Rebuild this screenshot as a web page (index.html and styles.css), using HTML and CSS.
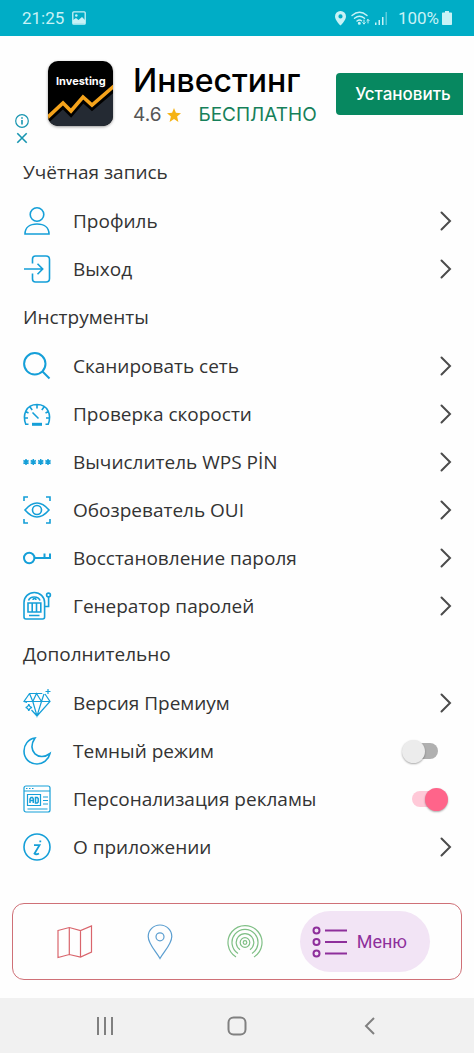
FILE: index.html
```
<!DOCTYPE html>
<html lang="ru">
<head>
<meta charset="utf-8">
<meta name="viewport" content="width=device-width, initial-scale=1">
<title>Меню</title>
<link rel="stylesheet" href="styles.css">
</head>
<body>
<svg class="defs" width="0" height="0" aria-hidden="true">
  <symbol id="chevron" viewBox="0 0 12 20"><path d="M1.500 1.500 10 10l-8.500 8.500" fill="none" stroke="currentColor" stroke-width="2" stroke-linecap="round"/></symbol>
</svg>
<header class="status">
  <span>21:25</span>
  <svg class="status-photo" width="14" height="14" viewBox="0 0 14 14"><rect x=".8" y=".8" width="12.400" height="12.400" rx="1" fill="none" stroke="currentColor" stroke-width="1.300"/><circle cx="4.300" cy="4.500" r="1.300" fill="currentColor"/><path d="M1 12.800V9l3-2 2.500 2L10 6l3 3v3.800z" fill="currentColor"/></svg>
  <div class="status-right">
    <svg width="11" height="15" viewBox="0 0 11 15"><path fill="currentColor" fill-rule="evenodd" d="M5.500 0A5.400 5.400 0 0 0 0 5.400C0 9 5.500 14.500 5.500 14.500S11 9 11 5.400A5.400 5.400 0 0 0 5.500 0zm0 3.300a2.100 2.100 0 1 1 0 4.200 2.100 2.100 0 0 1 0-4.200z"/></svg>
    <svg width="19" height="15" viewBox="0 0 19 15" fill="none" stroke="currentColor" stroke-width="1.400" stroke-linecap="round"><path d="M1 4.500q7.500-6.500 15 0M3.500 7.300q5-4.300 10 0M6 10q2.500-2 4.500-.3"/><circle cx="8.300" cy="12.300" r=".8" fill="currentColor"/><path d="M13 9v4m-1.300-1.300L13 13l1.300-1.300M17 12V8.500m-1.200 1.200L17 8.500l1.200 1.200" stroke-width="1"/></svg>
    <svg width="13" height="13" viewBox="0 0 13 13" fill="currentColor"><path d="M0 10.500h1.500V13H0zM3.500 8H5v5H3.500zM7 5h1.500v8H7z"/><path d="M10.500 0H12v13h-1.500z" opacity=".45"/></svg>
    <span class="battery">100%<svg width="10" height="14" viewBox="0 0 10 14"><path fill="currentColor" d="M3 0h4v1.500h2.300q.7 0 .7.700v11q0 .8-.8.800H.8q-.8 0-.8-.8v-11q0-.7.700-.7H3z"/></svg></span>
  </div>
</header>

<section class="ad">
  <div class="ad-tools">
    <button class="plain" aria-label="О рекламе"><svg width="14" height="14" viewBox="0 0 14 14" fill="none" stroke="currentColor"><circle cx="7" cy="7" r="6.300" stroke-width="1.200"/><path d="M7 6v4.500M7 3.300v1.400" stroke-width="1.600"/></svg></button>
    <button class="plain" aria-label="Закрыть"><svg width="12" height="12" viewBox="0 0 12 12" fill="none" stroke="currentColor" stroke-width="1.600"><path d="m1.300 1.300 9.400 9.400m0-9.400-9.400 9.400"/></svg></button>
  </div>
  <div class="ad-logo">
    <svg width="65" height="65" viewBox="0 0 65 65"><path d="M0 60 17 46l6 6 14-14 8 8 20-19v38H0z" fill="#242a33"/><path d="m-1 57 16-15 8 8 12-14 9 8 22-19" fill="none" stroke="#000" stroke-width="5" transform="translate(0 3)"/><path d="m-1 57 16-15 8 8 12-14 9 8 22-19" fill="none" stroke="#f5a31b" stroke-width="3.600"/><text x="8" y="24" class="logo-text">Investing</text></svg>
  </div>
  <div class="ad-info">
    <h1>Инвестинг</h1>
    <p><span>4.6</span><svg width="14" height="14" viewBox="0 0 14 14"><path d="m7 0 1.900 4.800 5.100.4-3.900 3.300L11.400 14 7 11l-4.400 3 1.300-5.500L0 5.200l5.100-.4z" fill="#f5b315"/></svg><span class="free">БЕСПЛАТНО</span></p>
  </div>
  <button class="install">Установить</button>
</section>

<main>
  <h2>Учётная запись</h2>
  <ul>
    <li><a class="row" href="#"><svg class="icon" viewBox="0 0 28 28"><circle cx="14" cy="7.500" r="6.800"/><path d="M2 27h24c0-6.500-5-10-12-10S2 20.500 2 27z"/></svg><span>Профиль</span><svg class="chevron"><use href="#chevron"/></svg></a></li>
    <li><a class="row" href="#"><svg class="icon" viewBox="0 0 28 28"><path d="M9.500 8.500V4q0-3 3-3H23q3.500 0 3.500 3.500v19Q26.500 27 23 27H12.500q-3 0-3-3v-5.500M1 14h18.500M14.500 8.800l5.200 5.200-5.200 5.200"/></svg><span>Выход</span><svg class="chevron"><use href="#chevron"/></svg></a></li>
  </ul>

  <h2>Инструменты</h2>
  <ul>
    <li><a class="row" href="#"><svg class="icon thick" viewBox="0 0 28 28"><circle cx="11.800" cy="11.800" r="10.700"/><path d="m19.500 19.500 7 7"/></svg><span>Сканировать сеть</span><svg class="chevron"><use href="#chevron"/></svg></a></li>
    <li><a class="row" href="#"><svg class="icon" viewBox="0 0 28 28"><path d="M5.500 24.300H2.800C-.8 15 3 4.500 14 4.500S28.800 15 25.200 24.300h-2.700M14 5v3.500M7 7l2.200 3M21 7l-2.200 3M2.500 11.500l3 1.500M25.500 11.500l-3 1.500M1.500 18H5M26.500 18H23M9.500 12.500l6 6"/><path d="M9 24.300h10" stroke-width="3"/></svg><span>Проверка скорости</span><svg class="chevron"><use href="#chevron"/></svg></a></li>
    <li><a class="row" href="#"><svg class="icon" viewBox="0 0 28 28"><path d="M3 11v6M.4 12.500l5.200 3M5.600 12.500l-5.200 3M10.300 11v6M7.700 12.500l5.200 3M12.900 12.500l-5.200 3M17.700 11v6M15.100 12.500l5.200 3M20.300 12.500l-5.200 3M25 11v6M22.400 12.500l5.200 3M27.600 12.500l-5.200 3" stroke-width="1.500"/></svg><span>Вычислитель WPS PİN</span><svg class="chevron"><use href="#chevron"/></svg></a></li>
    <li><a class="row" href="#"><svg class="icon" viewBox="0 0 28 28"><path d="M1 5V1h4M23 1h4v4M27 23v4h-4M5 27H1v-4M2 14q12-14 24 0-12 14-24 0z"/><circle cx="14" cy="14" r="4.500"/></svg><span>Обозреватель OUI</span><svg class="chevron"><use href="#chevron"/></svg></a></li>
    <li><a class="row" href="#"><svg class="icon key" viewBox="0 0 28 28"><circle cx="6.200" cy="14" r="5.200"/><path d="M11.500 14H27V9.500M21.500 14V9.500"/></svg><span>Восстановление пароля</span><svg class="chevron"><use href="#chevron"/></svg></a></li>
    <li><a class="row" href="#"><svg class="icon" viewBox="0 0 28 28"><path d="M1 25V10.500a10.300 10 0 0 1 20.600 0V25q0 2-2 2H3q-2 0-2-2zM5 11h12.800v9H5zM9.200 11v9M13.500 11v9M6 23.500h10.500M5.500 8.500a6 5 0 0 1 11.500 0M10 8a1.500 1.500 0 0 1 3 0M21.600 14.500h4V5"/><circle cx="25.500" cy="3" r="1.900"/></svg><span>Генератор паролей</span><svg class="chevron"><use href="#chevron"/></svg></a></li>
  </ul>

  <h2>Дополнительно</h2>
  <ul>
    <li><a class="row" href="#"><svg class="icon fine" viewBox="0 0 28 28"><path d="M6.500 4.500h12.800M22 5l5 7.500L14 27 8.500 21M4 13.500l-3-1 5.500-8M1 12.500h26M6.500 4.500l3.300 8L14 27l4.500-14.500L21 5M9.800 12.500 13.500 4.500l5 8M25 0v5M22.500 2.500h5"/><path d="M5.800 15q.5 3 3.200 3.500-2.700.5-3.200 3.500-.5-3-3.200-3.500 2.700-.5 3.200-3.500z"/></svg><span>Версия Премиум</span><svg class="chevron"><use href="#chevron"/></svg></a></li>
    <li><label class="row"><svg class="icon" viewBox="0 0 28 28"><path d="M12 1C5 2 1 8 1 14c0 7.500 5.500 13 13 13 6 0 11.500-4 13-10.500C16 25 3 14 12 1z"/></svg><span>Темный режим</span><input class="switch" type="checkbox"></label></li>
    <li><label class="row"><svg class="icon fine" viewBox="0 0 28 28"><rect x="1" y="1" width="26" height="26" rx="2"/><path d="M1 6h26M3 3.500h1.500M6 3.500h1.500M9 3.500h1.500M4.500 9.500h13v11h-13zM20 12h5M20 15.500h5M20 19h5M4.500 24h20"/><path d="M7 18v-4l1-1.500h1.500l.8 1.500v4M7 15.500h3.300M12.500 12.500V18h1.700l1-1v-3.500l-1-1z" stroke-width="1.500"/></svg><span>Персонализация рекламы</span><input class="switch" type="checkbox" checked></label></li>
    <li><a class="row" href="#"><svg class="icon" viewBox="0 0 28 28"><circle cx="14" cy="14" r="13"/><path d="M11 12.200h5.500l-5 8.300q1.500 1.500 4.500 0M17.300 7.500v1.800" stroke-width="1.800"/></svg><span>О приложении</span><svg class="chevron"><use href="#chevron"/></svg></a></li>
  </ul>
</main>

<nav class="tabs">
  <a href="#" class="tab red" aria-label="Карта"><svg width="36" height="36" viewBox="0 0 36 36"><path d="M1 6.500 12.300 3.500 23.500 6.500 34.500 2v26L23.500 33 12.300 30.500 1 33.500zM12.300 3.500v27M23.500 6.500V33"/></svg></a>
  <a href="#" class="tab blue" aria-label="Место"><svg width="26" height="36" viewBox="0 0 26 36"><path d="M13 34.500C9 27.500 1.200 20 1.200 12.500a11.800 11.500 0 0 1 23.600 0C24.800 20 17 27.500 13 34.500z"/><circle cx="13" cy="12.800" r="4"/></svg></a>
  <a href="#" class="tab green" aria-label="Точка доступа"><svg width="36" height="36" viewBox="0 0 36 36"><circle cx="18" cy="18.500" r="1.800"/><circle cx="18" cy="18.500" r="4.800"/><path d="M13 25.700a8.800 8.800 0 1 1 10 0M11 29.400a13 13 0 1 1 14 0M9 33a17 17 0 1 1 18 0"/></svg></a>
  <a href="#" class="tab menu" aria-current="page"><svg width="36" height="32" viewBox="0 0 36 32"><circle cx="4.500" cy="4.500" r="3"/><circle cx="4.500" cy="16" r="3"/><circle cx="4.500" cy="27.500" r="3"/><path d="M13 4.500h22M13 16h22M13 27.500h22"/></svg><span>Меню</span></a>
</nav>

<footer class="system">
  <button class="plain" aria-label="Недавние"><svg width="18" height="18" viewBox="0 0 18 18"><path d="M2 0v18M9 0v18M16 0v18"/></svg></button>
  <button class="plain" aria-label="Домой"><svg width="20" height="20" viewBox="0 0 20 20"><rect x="1.500" y="1.500" width="17" height="17" rx="5"/></svg></button>
  <button class="plain" aria-label="Назад"><svg width="20" height="20" viewBox="0 0 20 20"><path d="M14 2 6 10l8 8"/></svg></button>
</footer>
</body>
</html>
```
FILE: styles.css
```
* { box-sizing: border-box; }
body {
  margin: 0;
  min-height: 100vh;
  display: flex;
  flex-direction: column;
  background: #fefefe;
  color: #333;
  font-family: "Open Sans", "Noto Sans", sans-serif;
}
.defs { position: absolute; }
h1, h2, p, ul { margin: 0; padding: 0; font-weight: 400; }
ul { list-style: none; }
a { color: inherit; text-decoration: none; }
.plain { display: flex; padding: 0; border: 0; background: none; color: inherit; }

.status {
  display: flex;
  align-items: center;
  gap: 8px;
  height: 36px;
  padding: 0 22px;
  background: #00adc6;
  color: #c8f2f6;
  font: 17px Roboto, sans-serif;
}
.status-right { display: flex; align-items: center; gap: 5px; margin-left: auto; }
.battery { display: flex; align-items: center; gap: 3px; padding-left: 5px; }

.ad { display: flex; height: 112px; padding: 25px 11px 0 15px; }
.ad-tools {
  display: flex;
  flex-direction: column;
  align-items: center;
  gap: 4px;
  width: 13px;
  margin-right: 20px;
  padding-top: 53px;
  color: #1795b0;
}
.ad-logo {
  width: 65px;
  height: 65px;
  overflow: hidden;
  border-radius: 10px;
  background: #000;
  box-shadow: 0 1px 3px #0006;
}
.logo-text { fill: #fff; font: 700 11px Inter, sans-serif; }
.ad-info { margin-left: 20px; font-family: Inter, Roboto, sans-serif; }
.ad-info h1 { color: #000; font-size: 32px; font-weight: 500; line-height: 40px; }
.ad-info p { display: flex; align-items: center; color: #555; font-size: 19px; line-height: 28px; }
.ad-info p svg { margin: 0 17px 0 6px; }
.free { color: #16805a; }
.install {
  width: 127px;
  height: 42px;
  margin: 12px 0 0 auto;
  padding: 0 0 0 7px;
  border: 0;
  border-radius: 4px 0 0 4px;
  background: #078860;
  color: #fff;
  font: 500 17px Inter, Roboto, sans-serif;
}

main { font-size: 19px; }
h2 { padding-left: 23px; font-size: 19px; line-height: 49px; }
.row { display: flex; align-items: center; height: 48px; padding: 0 22px 0 23px; }
.row span { margin-left: 22px; }
.icon {
  width: 28px;
  height: 28px;
  overflow: visible;
  fill: none;
  stroke: #159fd8;
  stroke-width: 1.6;
}
.thick, .key { stroke-width: 2; }
.fine { stroke-width: 1.2; }
.chevron { width: 12px; height: 20px; margin-left: auto; color: #4b4b4b; }
.switch {
  appearance: none;
  display: grid;
  align-items: center;
  width: 36px;
  height: 24px;
  margin: 0 14px 0 auto;
}
.switch::before, .switch::after { content: ""; grid-area: 1 / 1; }
.switch::before {
  justify-self: end;
  width: 28px;
  height: 16px;
  border-radius: 8px;
  background: #b0b0b0;
}
.switch::after {
  justify-self: start;
  width: 23px;
  height: 23px;
  border-radius: 50%;
  background: #ececec;
  box-shadow: 0 1px 2px #0005;
}
.switch:checked { margin-right: 4px; }
.switch:checked::before { justify-self: start; background: #ffc9d8; }
.switch:checked::after { justify-self: end; background: #ff648a; }

.tabs {
  display: flex;
  align-items: center;
  height: 77px;
  margin: auto 12px 18px;
  padding: 0 31px 0 20px;
  border: 1px solid #cf7077;
  border-radius: 12px;
}
.tab {
  display: flex;
  flex: 1;
  align-items: center;
  justify-content: center;
  fill: none;
  stroke: currentColor;
  stroke-width: 1.2;
}
.red { color: #d9656c; }
.blue { color: #5b9ed0; }
.green { color: #7fbf85; }
.menu {
  flex: none;
  gap: 9px;
  height: 61px;
  margin-left: 12px;
  padding: 0 23px 0 12px;
  border-radius: 31px;
  background: #f2e4f5;
  color: #8e2f9b;
  font: 18px Roboto, sans-serif;
  stroke-width: 2;
}
.menu span { stroke: none; }

.system {
  display: flex;
  align-items: center;
  justify-content: space-between;
  height: 55px;
  padding: 0 94px 0 96px;
  background: #f1f1f1;
}
.system svg { fill: none; stroke: #808080; stroke-width: 2; }
```
